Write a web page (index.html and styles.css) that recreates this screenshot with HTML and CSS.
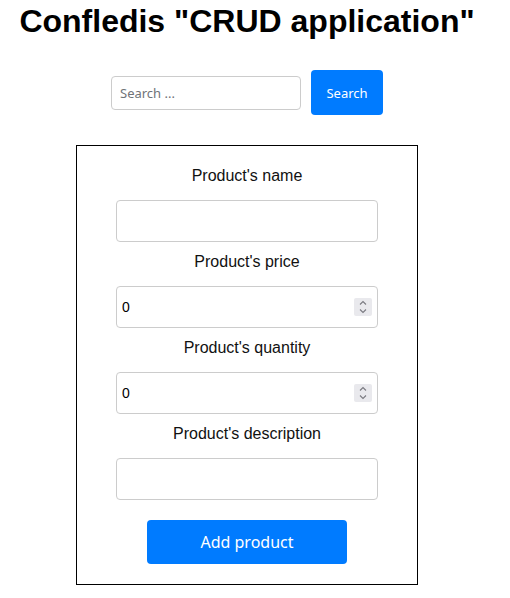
FILE: index.html
```html
<!DOCTYPE html>
<html lang="en">
<head>
<meta charset="utf-8">
<title>Confledis CRUD application</title>
<link rel="stylesheet" href="styles.css">
</head>
<body>
<main class="page">
  <h1 class="title">Confledis "CRUD application"</h1>
  <form class="search-row">
    <input class="search-input" type="text" placeholder="Search ...">
    <button class="btn btn-search" type="button">Search</button>
  </form>
  <form class="product-form">
    <label class="field-label">Product's name</label>
    <input class="field-input" type="text">
    <label class="field-label">Product's price</label>
    <div class="number-wrap">
      <input class="field-input" type="number" value="0">
      <span class="spinner" aria-hidden="true">
        <svg width="18" height="18" viewBox="0 0 18 18"><path d="M6 6.5 L9 3.5 L12 6.5" fill="none" stroke="#7a7a80" stroke-width="1.1"/><path d="M6 11.5 L9 14.5 L12 11.5" fill="none" stroke="#7a7a80" stroke-width="1.1"/></svg>
      </span>
    </div>
    <label class="field-label">Product's quantity</label>
    <div class="number-wrap">
      <input class="field-input" type="number" value="0">
      <span class="spinner" aria-hidden="true">
        <svg width="18" height="18" viewBox="0 0 18 18"><path d="M6 6.5 L9 3.5 L12 6.5" fill="none" stroke="#7a7a80" stroke-width="1.1"/><path d="M6 11.5 L9 14.5 L12 11.5" fill="none" stroke="#7a7a80" stroke-width="1.1"/></svg>
      </span>
    </div>
    <label class="field-label">Product's description</label>
    <input class="field-input" type="text">
    <button class="btn btn-add" type="button">Add product</button>
  </form>
</main>
</body>
</html>
```
FILE: styles.css
```css
html, body {
  margin: 0;
  padding: 0;
  background: #fff;
}
body {
  font-family: "Liberation Sans", Arial, sans-serif;
  color: #000;
}
.page {
  width: 494px;
  display: flex;
  flex-direction: column;
  align-items: center;
}
.title {
  margin: 3px 0 0;
  font-size: 32px;
  font-weight: bold;
  line-height: 37px;
  white-space: nowrap;
}
.search-row {
  margin-top: 30px;
  display: flex;
  align-items: center;
  gap: 10px;
}
.search-input {
  box-sizing: border-box;
  width: 190px;
  height: 34px;
  border: 1px solid #cccccc;
  border-radius: 4px;
  padding: 0 8px;
  font-family: "Noto Sans", "Open Sans", sans-serif;
  font-size: 13px;
  color: #333;
  outline: none;
}
.search-input::placeholder {
  color: #6f7378;
}
.btn {
  border: none;
  background: #007bff;
  color: #fff;
  border-radius: 4px;
  font-family: "Noto Sans", "Open Sans", sans-serif;
  cursor: pointer;
}
.btn-search {
  width: 72px;
  height: 45px;
  font-size: 13px;
}
.product-form {
  margin-top: 30px;
  box-sizing: border-box;
  width: 342px;
  border: 1px solid #000;
  padding: 20px 0 20px;
  display: flex;
  flex-direction: column;
  align-items: center;
}
.field-label {
  font-size: 16px;
  line-height: 20px;
  height: 20px;
  margin-bottom: 14px;
  color: #111;
}
.field-input {
  box-sizing: border-box;
  width: 262px;
  height: 42px;
  border: 1px solid #cccccc;
  border-radius: 4px;
  padding: 0 5px;
  margin-bottom: 10px;
  font-family: "Liberation Sans", Arial, sans-serif;
  font-size: 14px;
  color: #000;
  outline: none;
  display: block;
}
.field-input[type="number"] {
  -moz-appearance: textfield;
}
.field-input::-webkit-inner-spin-button,
.field-input::-webkit-outer-spin-button {
  -webkit-appearance: none;
  margin: 0;
}
.number-wrap {
  position: relative;
}
.spinner {
  position: absolute;
  top: 12px;
  right: 6px;
  width: 18px;
  height: 18px;
  background: #e9e9ed;
  border-radius: 2px;
  display: block;
}
.spinner svg {
  display: block;
}
.btn-add {
  margin-top: 10px;
  width: 200px;
  height: 44px;
  font-size: 16px;
}
```
